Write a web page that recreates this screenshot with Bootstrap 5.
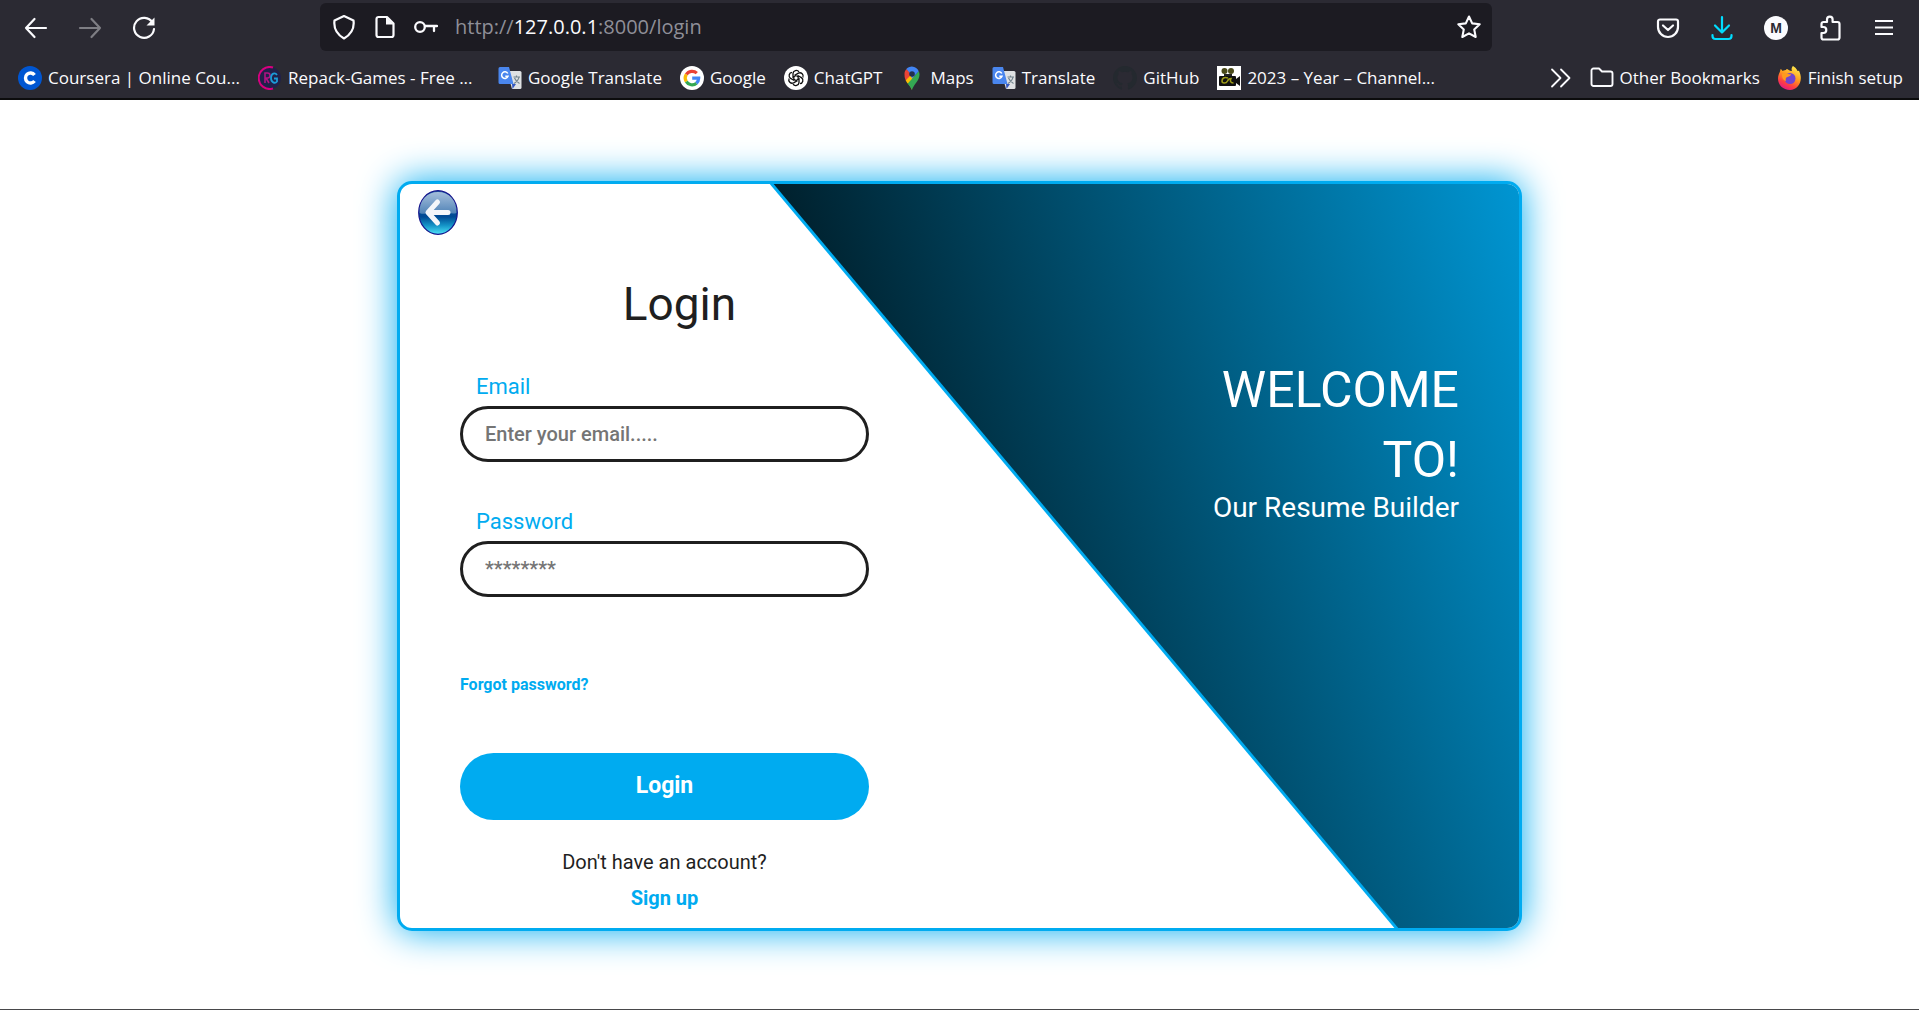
<!DOCTYPE html>
<html lang="en">
<head>
<meta charset="utf-8">
<meta name="viewport" content="width=device-width, initial-scale=1">
<title>Login</title>
<link href="https://cdn.jsdelivr.net/npm/bootstrap@5.3.0/dist/css/bootstrap.min.css" rel="stylesheet">
<style>
  :root { --accent: #00abf0; --ink: #1f1f1f; }
  body { font-family: Roboto, "Liberation Sans", sans-serif; color: var(--ink); background: #fff; }
  svg { display: block; flex: none; }

  /* browser chrome */
  .chrome { background: #2b2a33; color: #fbfbfe; font-family: "Open Sans", "Noto Sans", sans-serif; border-bottom: 2px solid #0c0c0d; }
  .toolbar { height: 52px; padding-top: 3px; }
  .nav-side { width: 320px; padding-left: 24px; gap: 30px; }
  .tool-side { width: 427px; padding-right: 23px; gap: 30px; }
  .icon-btn { background: none; border: 0; padding: 0; color: inherit; }
  .icon-btn:disabled { opacity: .4; }
  .address { height: 48px; background: #1c1b22; border-radius: 6px; padding: 0 10px 0 12px; gap: 17px; }
  .url { font-size: 20px; line-height: 28px; color: #8f8f98; }
  .url b { font-weight: 400; color: #fbfbfe; }
  .bookmarks { height: 46px; padding: 6px 16px 0 18px; font-size: 17px; line-height: 24px; }
  .bookmarks a { color: inherit; text-decoration: none; display: flex; align-items: center; gap: 6px; white-space: nowrap; }
  .marks-left { gap: 18px; }
  .bookmarks .long-mark { min-width: 222px; }

  /* login panel */
  .stage { padding-top: 2px; }
  .panel { width: 1125px; max-width: 100%; min-height: 750px; border: 3px solid var(--accent); border-radius: 15px; box-shadow: 0 0 37px var(--accent); background: #fff; }
  .slant { inset: 0; }
  .back { padding: 6px 0 0 18px; }
  .form-col { width: 409px; margin-left: 60px; }
  .title-text { font-size: 46px; line-height: 56px; font-weight: 400; padding-left: 30px; margin: 34px 0 40px; }
  .field-label { font-size: 22px; line-height: 30px; color: var(--accent); padding-left: 16px; margin-bottom: 4px; }
  .pill { height: 56px; border: 3px solid var(--ink); border-radius: 28px; padding: 0 22px; font-size: 20px; font-weight: 500; }
  .pill::placeholder { color: #757575; opacity: 1; }
  .field-gap { margin-bottom: 45px; }
  .accent-link { color: var(--accent); font-weight: 700; text-decoration: none; }
  .forgot { font-size: 16px; line-height: 24px; margin: 76px 0 56px; }
  .btn-login { height: 67px; border-radius: 34px; background: var(--accent); color: #fff; font-size: 23px; font-weight: 700; }
  .signup { font-size: 20px; line-height: 36px; margin-top: 24px; }
  .welcome { padding: 171px 60px 0 0; color: #fff; }
  .welcome h2 { font-size: 50px; line-height: 70px; font-weight: 400; margin: 0; }
  .welcome p { font-size: 28px; line-height: 26px; margin: 0; }
  .edge { height: 1px; background: #48484a; }
</style>
<script src="https://cdn.jsdelivr.net/npm/bootstrap@5.3.0/dist/js/bootstrap.bundle.min.js"></script>
</head>
<body class="d-flex flex-column min-vh-100">

<header class="chrome">
  <div class="toolbar d-flex">
    <nav class="nav-side d-flex align-items-center" aria-label="History">
      <button class="icon-btn" aria-label="Back"><svg width="24" height="24" viewBox="0 0 24 24" fill="none" stroke="currentColor" stroke-width="2.2" stroke-linecap="round" stroke-linejoin="round"><path d="M22 12H2M10.500 3L2 12l8.500 9"/></svg></button>
      <button class="icon-btn" aria-label="Forward" disabled><svg width="24" height="24" viewBox="0 0 24 24" fill="none" stroke="currentColor" stroke-width="2.200" stroke-linecap="round" stroke-linejoin="round"><path d="M2 12h20M13.500 3L22 12l-8.500 9"/></svg></button>
      <button class="icon-btn" aria-label="Reload"><svg width="24" height="24" viewBox="0 0 24 24" fill="none" stroke="currentColor" stroke-width="2.200" stroke-linecap="round"><path d="M20.500 6.500A10 10 0 1 0 22 13"/><path d="M22.500 1.500v8h-8z" fill="currentColor" stroke="none"/></svg></button>
    </nav>
    <div class="address d-flex align-items-center flex-grow-1">
      <svg width="24" height="26" viewBox="0 0 24 26" fill="none" stroke="currentColor" stroke-width="2.200" stroke-linejoin="round"><path d="M12 2l9.500 4.500C22.500 14 19 20.500 12 24.500 5 20.500 1.500 14 2.500 6.500z"/></svg>
      <svg width="24" height="24" viewBox="0 0 24 24" fill="none" stroke="currentColor" stroke-width="2.200" stroke-linejoin="round"><path d="M5.500 2H14l6.500 6.500V20a2 2 0 0 1-2 2h-13a2 2 0 0 1-2-2V4a2 2 0 0 1 2-2z"/><path d="M13 2v7.500h7.500z" fill="currentColor" stroke="none"/></svg>
      <svg width="24" height="24" viewBox="0 0 24 24" fill="none" stroke="currentColor" stroke-width="2.300" stroke-linecap="round"><circle cx="6" cy="12" r="4.800"/><path d="M11 11h12M20 11v5"/></svg>
      <span class="url flex-grow-1">http://<b>127.0.0.1</b>:8000/login</span>
      <button class="icon-btn" aria-label="Bookmark this page"><svg width="26" height="26" viewBox="0 0 26 26" fill="none" stroke="currentColor" stroke-width="2.100" stroke-linejoin="round"><path d="M13 2.500l3.200 6.900 7.500.9-5.500 5.100 1.500 7.600L13 19.300 6.300 23l1.500-7.600-5.500-5.100 7.500-.9z"/></svg></button>
    </div>
    <div class="tool-side d-flex align-items-center justify-content-end">
      <button class="icon-btn" aria-label="Pocket"><svg width="24" height="24" viewBox="0 0 24 24" fill="none" stroke="currentColor" stroke-width="2.200" stroke-linecap="round" stroke-linejoin="round"><path d="M4 3.500h16a2 2 0 0 1 2 2V11a10 10 0 0 1-20 0V5.500a2 2 0 0 1 2-2zM7 9.500l5 4.500 5-4.500"/></svg></button>
      <button class="icon-btn" aria-label="Downloads"><svg width="24" height="26" viewBox="0 0 24 26" fill="none" stroke="#00ddff" stroke-width="2.200" stroke-linecap="round" stroke-linejoin="round"><path d="M12 2v15.500M5 10.500l7 7 7-7M2.500 20v1a3 3 0 0 0 3 3h13a3 3 0 0 0 3-3v-1"/></svg></button>
      <button class="icon-btn" aria-label="Account"><svg width="24" height="24" viewBox="0 0 24 24"><circle cx="12" cy="12" r="12" fill="#fbfbfe"/><text x="12" y="17" text-anchor="middle" font-family="Liberation Sans, sans-serif" font-size="14" font-weight="700" fill="#2b2a33">M</text></svg></button>
      <button class="icon-btn" aria-label="Extensions"><svg width="24" height="26" viewBox="0 0 24 26" fill="none" stroke="currentColor" stroke-width="2.200" stroke-linejoin="round"><path d="M3.500 12V9a2 2 0 0 1 2-2H9V4.500a2.800 2.800 0 0 1 5.600 0V7h4.900a2 2 0 0 1 2 2v13.500a2 2 0 0 1-2 2h-14a2 2 0 0 1-2-2V18h1.800a3 3 0 0 0 0-6z"/></svg></button>
      <button class="icon-btn" aria-label="Menu"><svg width="24" height="24" viewBox="0 0 24 24" stroke="currentColor" stroke-width="2"><path d="M3 5h18M3 11.500h18M3 18h18"/></svg></button>
    </div>
  </div>
  <div class="bookmarks d-flex align-items-center justify-content-between">
    <div class="marks-left d-flex">
      <a class="long-mark" href="#"><svg width="24" height="24" viewBox="0 0 24 24"><circle cx="12" cy="12" r="12" fill="#0056d2"/><path d="M16.500 9a5 5 0 1 0 0 6" fill="none" stroke="#fff" stroke-width="3.400"/></svg>Coursera | Online Cou...</a>
      <a class="long-mark" href="#"><svg width="24" height="24" viewBox="0 0 24 24" fill="none"><circle cx="12" cy="12" r="11" fill="#20204a"/><path d="M15 1.500A11 11 0 1 0 15 22.500" stroke="#d6007f" stroke-width="2"/><path d="M7 17V7h2.500a2.500 2.500 0 0 1 0 5H8l3 5" stroke="#b01283" stroke-width="1.600"/><path d="M19 9c-2-3-6-1.500-6 3s4 6 6 3.500V12.500h-3" stroke="#1b9bd8" stroke-width="1.800"/></svg>Repack-Games - Free ...</a>
      <a href="#"><svg width="24" height="24" viewBox="0 0 24 24"><path d="M9 5h13a1.500 1.500 0 0 1 1.500 1.500v15A1.500 1.500 0 0 1 22 23h-8z" fill="#dfe1e3"/><path d="M14 18h4l-3.500 5z" fill="#3457c0"/><path d="M2 1h9l4.500 17H2a1.500 1.500 0 0 1-1.500-1.500v-14A1.500 1.500 0 0 1 2 1z" fill="#4a86ee"/><path d="M9.800 7.500A3.300 3.300 0 1 0 10 10.300H7.300" fill="none" stroke="#fff" stroke-width="1.500"/><path d="M15.500 11h6.500M18.500 9.500V11M21 11c-.5 3-2.500 5-5 6.500M16.500 12c1 2.500 2.500 4 5 5.500" fill="none" stroke="#73848e" stroke-width="1.200"/></svg>Google Translate</a>
      <a href="#"><svg width="24" height="24" viewBox="0 0 24 24" fill="none" stroke-width="3.200"><circle cx="12" cy="12" r="12" fill="#fff"/><path d="M6.300 8.500A6.800 6.800 0 0 1 16.800 7.200" stroke="#ea4335"/><path d="M6.300 15.700a6.800 6.800 0 0 1 0-7.300" stroke="#fbbc05"/><path d="M16.500 17.200a6.800 6.800 0 0 1-10.200-1.600" stroke="#34a853"/><path d="M12.200 12.200h6.500a6.800 6.800 0 0 1-2.300 5" stroke="#4285f4"/></svg>Google</a>
      <a href="#"><svg width="24" height="24" viewBox="0 0 24 24" fill="none" stroke="#111" stroke-width="1.300"><circle cx="12" cy="12" r="12" fill="#fff" stroke="none"/><path id="petal" d="M12 9.500l-3 1.700V7.500a3.300 3.300 0 0 1 6-1.700"/><use href="#petal" transform="rotate(60 12 12)"/><use href="#petal" transform="rotate(120 12 12)"/><use href="#petal" transform="rotate(180 12 12)"/><use href="#petal" transform="rotate(240 12 12)"/><use href="#petal" transform="rotate(300 12 12)"/></svg>ChatGPT</a>
      <a href="#"><svg width="24" height="24" viewBox="0 0 24 24"><path d="M12 24c-1-4-7-9-7-15.500L12 8z" fill="#fbbc04"/><path d="M12 24c1-5 7.500-9 7.500-15.500a8 8 0 0 0-.8-3.300L7.500 17.500C9.500 20 11.300 22 12 24z" fill="#34a853"/><path d="M4.500 8c0-2 .7-3.500 1.800-5L12 8l-6.300 6.500A13 13 0 0 1 4.500 8z" fill="#ea4335"/><path d="M5.700 14.500L12 8.500l2 2-6.500 7z" fill="#fbbc04"/><path d="M6.300 3A7.500 7.500 0 0 1 18.700 5.200L12 12.500 9 6z" fill="#4285f4"/><circle cx="12" cy="8" r="2.800" fill="#22304d"/></svg>Maps</a>
      <a href="#"><svg width="24" height="24" viewBox="0 0 24 24"><path d="M9 5h13a1.500 1.500 0 0 1 1.500 1.500v15A1.500 1.500 0 0 1 22 23h-8z" fill="#dfe1e3"/><path d="M14 18h4l-3.500 5z" fill="#3457c0"/><path d="M2 1h9l4.500 17H2a1.500 1.500 0 0 1-1.500-1.500v-14A1.500 1.500 0 0 1 2 1z" fill="#4a86ee"/><path d="M9.800 7.500A3.300 3.300 0 1 0 10 10.300H7.300" fill="none" stroke="#fff" stroke-width="1.500"/><path d="M15.500 11h6.500M18.500 9.500V11M21 11c-.5 3-2.500 5-5 6.500M16.500 12c1 2.500 2.500 4 5 5.500" fill="none" stroke="#73848e" stroke-width="1.200"/></svg>Translate</a>
      <a href="#"><svg width="24" height="24" viewBox="0 0 16 16"><path fill="#24292f" d="M8 0C3.580 0 0 3.580 0 8c0 3.540 2.290 6.530 5.470 7.590.4.070.55-.17.55-.38 0-.19-.01-.82-.01-1.490-2.010.37-2.530-.49-2.690-.94-.09-.23-.48-.94-.82-1.130-.28-.15-.68-.52-.01-.53.63-.01 1.080.58 1.230.82.72 1.210 1.870.87 2.330.66.07-.52.28-.87.51-1.070-1.780-.2-3.640-.89-3.640-3.950 0-.87.31-1.590.82-2.150-.08-.2-.36-1.020.08-2.120 0 0 .67-.21 2.200.82a7.600 7.600 0 0 1 4 0c1.530-1.040 2.200-.82 2.200-.82.44 1.100.16 1.920.08 2.120.51.56.82 1.270.82 2.150 0 3.070-1.870 3.750-3.650 3.950.29.25.54.73.54 1.480 0 1.070-.01 1.930-.01 2.200 0 .21.15.46.55.38A8 8 0 0 0 16 8c0-4.420-3.580-8-8-8z"/></svg>GitHub</a>
      <a href="#"><svg width="24" height="24" viewBox="0 0 24 24"><path fill="#fff" d="M0 0h24v24H0z"/><g fill="#4a4a1a"><circle cx="7.500" cy="5" r="3"/><circle cx="14" cy="5" r="3"/></g><path d="M7 8h8v3H7z" fill="#222"/><rect x="2" y="10" width="17" height="10" rx="1" fill="#101010"/><path d="M19 13l4-3v10l-4-3z" fill="#101010"/><path d="M11 12c-4-1.500-6 .5-6 3s4 3 5.500 0c.5-1.500 1.500-2.500 3.500-2.500-1 2-1 4.500 2.500 4.500" fill="none" stroke="#9c9a18" stroke-width="1.600"/></svg>2023 – Year – Channel...</a>
    </div>
    <div class="marks-left d-flex">
      <button class="icon-btn" aria-label="More bookmarks"><svg width="22" height="22" viewBox="0 0 22 22" fill="none" stroke="currentColor" stroke-width="1.800" stroke-linecap="round" stroke-linejoin="round"><path d="M2 2.500l8.500 8.500L2 19.500M11 2.500l8.500 8.500-8.500 8.500"/></svg></button>
      <a href="#"><svg width="24" height="24" viewBox="0 0 24 24" fill="none" stroke="currentColor" stroke-width="1.900" stroke-linejoin="round"><path d="M3.500 2.500H9L12 5.500h8.500a2 2 0 0 1 2 2V18a2 2 0 0 1-2 2h-17a2 2 0 0 1-2-2V4.500a2 2 0 0 1 2-2z"/></svg>Other Bookmarks</a>
      <a href="#"><svg width="24" height="24" viewBox="0 0 24 24"><defs><linearGradient id="fox" x1="0.800" y1="0" x2="0.300" y2="1"><stop offset="0" stop-color="#fff14f"/><stop offset=".45" stop-color="#ff9a1f"/><stop offset=".75" stop-color="#ff4040"/><stop offset="1" stop-color="#e3158a"/></linearGradient></defs><path d="M15 0c4 2.500 4.500 5 4.500 5 1-.3 1.500-.3 1.500-.3 5 10-1 19.300-9 19.300C5 24 0 19 0 12.500 0 8 2.500 6 2.500 3c1.500.5 2 2 2 2C6 4 8 4 8 4c1-3 2 1 6 1-1-2 0-4 1-5z" fill="url(#fox)"/><circle cx="12" cy="12.500" r="5.500" fill="#7245cf"/><path d="M4 8c4-2 5 1 9 0 0 2-2 2.500-3.500 3-2 .6-2 2-1.500 4-4-1-4-5-4-7z" fill="#ff9a1f"/></svg>Finish setup</a>
    </div>
  </div>
</header>

<main class="stage flex-grow-1 d-flex align-items-center justify-content-center">
  <section class="panel position-relative overflow-hidden">
    <svg class="slant position-absolute w-100 h-100" viewBox="0 0 1119 744" preserveAspectRatio="none" aria-hidden="true">
      <defs><linearGradient id="sea" gradientUnits="userSpaceOnUse" x1="360" y1="80" x2="1138" y2="-180"><stop offset="0" stop-color="#001a24"/><stop offset="1" stop-color="#00a2e4"/></linearGradient></defs>
      <path d="M371 0H1119V744H996z" fill="url(#sea)"/>
      <path d="M370 -2L998 746" stroke="#00abf0" stroke-width="3"/>
    </svg>
    <div class="position-relative d-flex justify-content-between">
      <div>
        <a class="back d-inline-block" href="#" aria-label="Back"><svg width="40" height="45" viewBox="0 0 40 45"><defs><linearGradient id="orb" x1="0" y1="0" x2="0" y2="1"><stop offset="0" stop-color="#1c5ea6"/><stop offset=".6" stop-color="#004a94"/><stop offset=".8" stop-color="#1595c8"/><stop offset="1" stop-color="#4fe3f8"/></linearGradient><linearGradient id="gloss" x1="0" y1="0" x2="0" y2="1"><stop offset="0" stop-color="#fff" stop-opacity=".6"/><stop offset="1" stop-color="#fff" stop-opacity=".3"/></linearGradient></defs><ellipse cx="20" cy="22.500" rx="19.300" ry="21.800" fill="url(#orb)" stroke="#14148c" stroke-width="1.200"/><path d="M1.500 23C1 10 9 2 20 2s19 8 18.500 21c-5 2-9-2-18.500-1S6 25 1.500 23z" fill="url(#gloss)"/><path d="M30 22.500H11M19.500 12L10 22.500 19.500 33" fill="none" stroke="#f4f6fa" stroke-width="5" stroke-linecap="round" stroke-linejoin="round"/></svg></a>
        <form class="form-col">
          <h1 class="title-text text-center">Login</h1>
          <div class="field-gap">
            <label class="field-label d-block" for="email">Email</label>
            <input class="pill form-control" id="email" type="email" placeholder="Enter your email.....">
          </div>
          <div>
            <label class="field-label d-block" for="password">Password</label>
            <input class="pill form-control" id="password" type="password" placeholder="********">
          </div>
          <div class="forgot"><a class="accent-link" href="#">Forgot password?</a></div>
          <button class="btn-login btn w-100" type="submit">Login</button>
          <div class="signup text-center">Don't have an account?<br><a class="accent-link" href="#">Sign up</a></div>
        </form>
      </div>
      <div class="welcome text-end">
        <h2>WELCOME<br>TO!</h2>
        <p>Our Resume Builder</p>
      </div>
    </div>
  </section>
</main>
<div class="edge"></div>
</body>
</html>
